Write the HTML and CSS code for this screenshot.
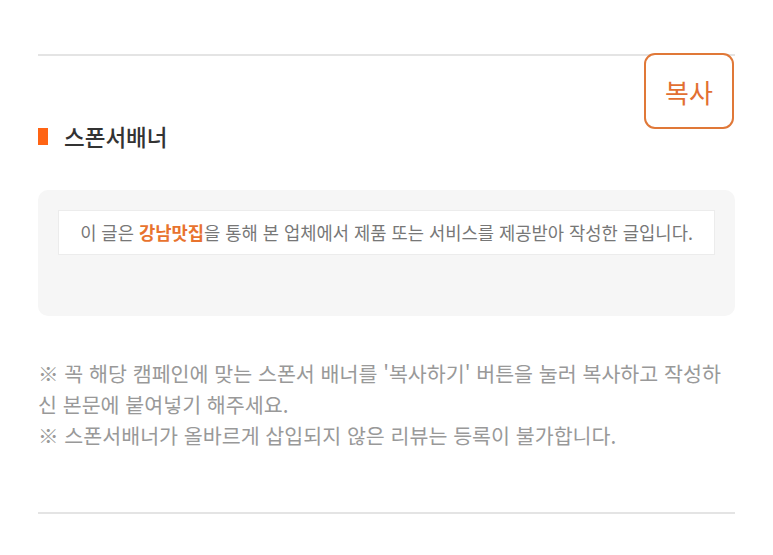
FILE: index.html
```html
<!DOCTYPE html>
<html lang="ko">

<head>
    <meta charset="UTF-8">
    <meta name="viewport" content="width=device-width, initial-scale=1.0">
    <title>스폰서배너</title>
    <link rel="stylesheet" href="styles.css">
</head>

<body>

    <div class="container">
        <hr class="rule">

        <!-- Section heading with copy button -->
        <div class="section-head">
            <span class="marker"></span>
            <h2 class="title">스폰서배너</h2>
            <button class="copy-button">복사</button>
        </div>

        <!-- Banner preview -->
        <div class="banner-box">
            <div class="banner">이 글은 <strong class="brand">강남맛집</strong>을 통해 본 업체에서 제품 또는 서비스를 제공받아 작성한 글입니다.</div>
        </div>

        <!-- Notices -->
        <div class="notice">
            <p>※ 꼭 해당 캠페인에 맞는 스폰서 배너를 '복사하기' 버튼을 눌러 복사하고 작성하신 본문에 붙여넣기 해주세요.</p>
            <p>※ 스폰서배너가 올바르게 삽입되지 않은 리뷰는 등록이 불가합니다.</p>
        </div>

        <hr class="rule rule-bottom">
    </div>

</body>

</html>
```

FILE: styles.css
```css
/* Reset */
* {
    margin: 0;
    padding: 0;
    box-sizing: border-box;
    font-family: "Noto Sans CJK KR", "Noto Sans", sans-serif;
}

body {
    background: #fff;
}

.container {
    width: 773px;
    padding: 54px 38px 0;
}

/* Divider lines */
.rule {
    border: none;
    border-top: 2px solid #e4e4e4;
}

.rule-bottom {
    margin-top: 61px;
}

/* Heading row */
.section-head {
    position: relative;
    display: flex;
    align-items: center;
    gap: 16px;
    margin-top: 67px;
    height: 26px;
}

.marker {
    width: 10px;
    height: 17px;
    background-color: #ff6414;
}

.title {
    font-size: 22.5px;
    font-weight: 500;
    color: #333;
    line-height: 26px;
}

.copy-button {
    position: absolute;
    top: -70px;
    right: 1px;
    width: 90px;
    height: 76px;
    background: #fff;
    border: 2px solid #e07838;
    border-radius: 11px;
    color: #e26f32;
    font-size: 26px;
    font-weight: 400;
    cursor: pointer;
}

/* Banner preview */
.banner-box {
    margin-top: 41px;
    padding: 20px 20px 61px;
    background-color: #f6f6f6;
    border-radius: 10px;
}

.banner {
    height: 45px;
    line-height: 43px;
    background: #fff;
    border: 1px solid #ececec;
    text-align: center;
    font-size: 17.7px;
    color: #777;
}

.brand {
    color: #e8732e;
    font-weight: 700;
}

/* Notices */
.notice {
    margin-top: 42px;
    font-size: 20.6px;
    line-height: 31px;
    color: #999;
}
```
